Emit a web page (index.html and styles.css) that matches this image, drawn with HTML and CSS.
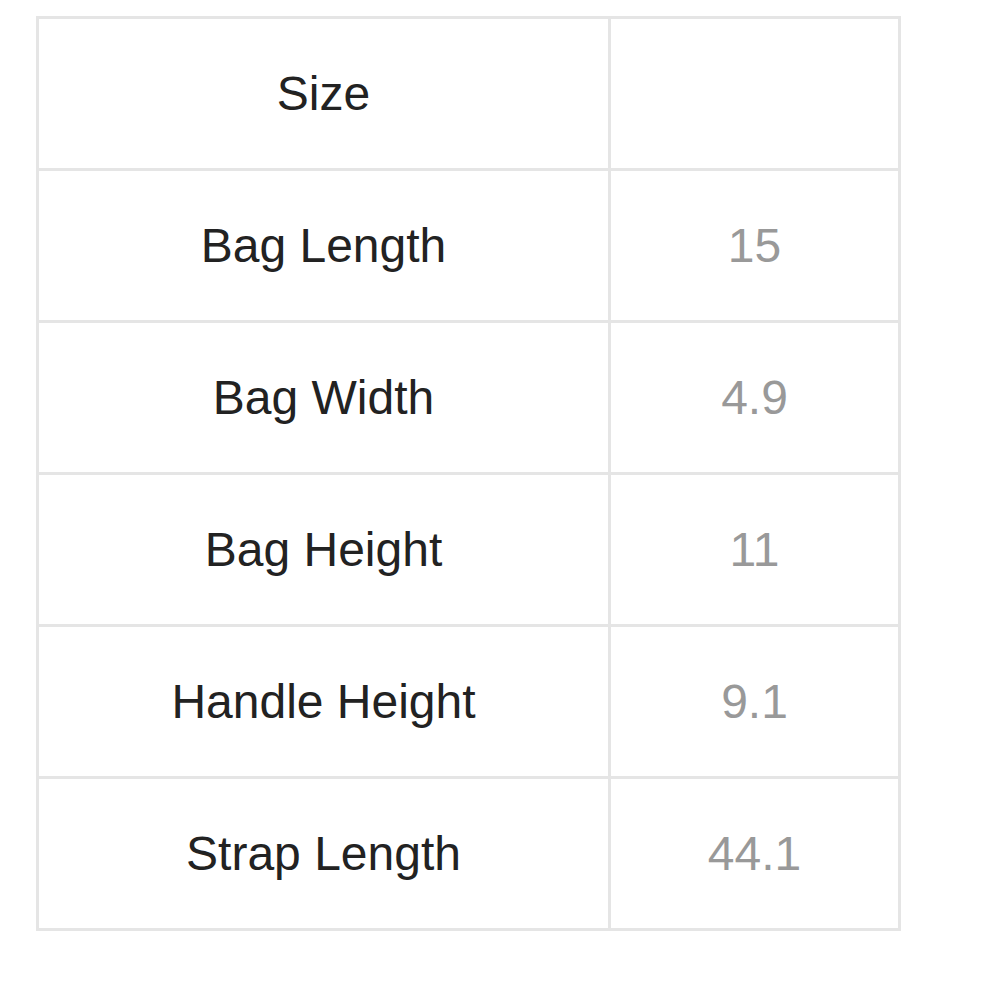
FILE: index.html
```html
<!DOCTYPE html>
<html>
<head>
<meta charset="utf-8">
<link rel="stylesheet" href="styles.css">
</head>
<body>
<table class="size-table">
  <tbody>
    <tr><td class="label">Size</td><td class="value"></td></tr>
    <tr><td class="label">Bag Length</td><td class="value">15</td></tr>
    <tr><td class="label">Bag Width</td><td class="value">4.9</td></tr>
    <tr><td class="label">Bag Height</td><td class="value">11</td></tr>
    <tr><td class="label">Handle Height</td><td class="value">9.1</td></tr>
    <tr><td class="label">Strap Length</td><td class="value">44.1</td></tr>
  </tbody>
</table>
</body>
</html>
```
FILE: styles.css
```css
html, body {
  margin: 0;
  padding: 0;
  background: #ffffff;
}
body {
  padding: 16px 0 0 36px;
  font-family: "Liberation Sans", Arial, Helvetica, sans-serif;
}
.size-table {
  border-collapse: separate;
  border-spacing: 0;
  table-layout: fixed;
  width: 865px;
  border-left: 3px solid #e5e5e5;
  border-top: 3px solid #e5e5e5;
}
.size-table td {
  box-sizing: border-box;
  height: 152px;
  padding: 0;
  border-right: 3px solid #e5e5e5;
  border-bottom: 3px solid #e5e5e5;
  text-align: center;
  vertical-align: middle;
  font-size: 48px;
  line-height: 1.15;
}
.size-table td.label {
  width: 572px;
  color: #222222;
}
.size-table td.value {
  width: 290px;
  color: #999999;
}
```
